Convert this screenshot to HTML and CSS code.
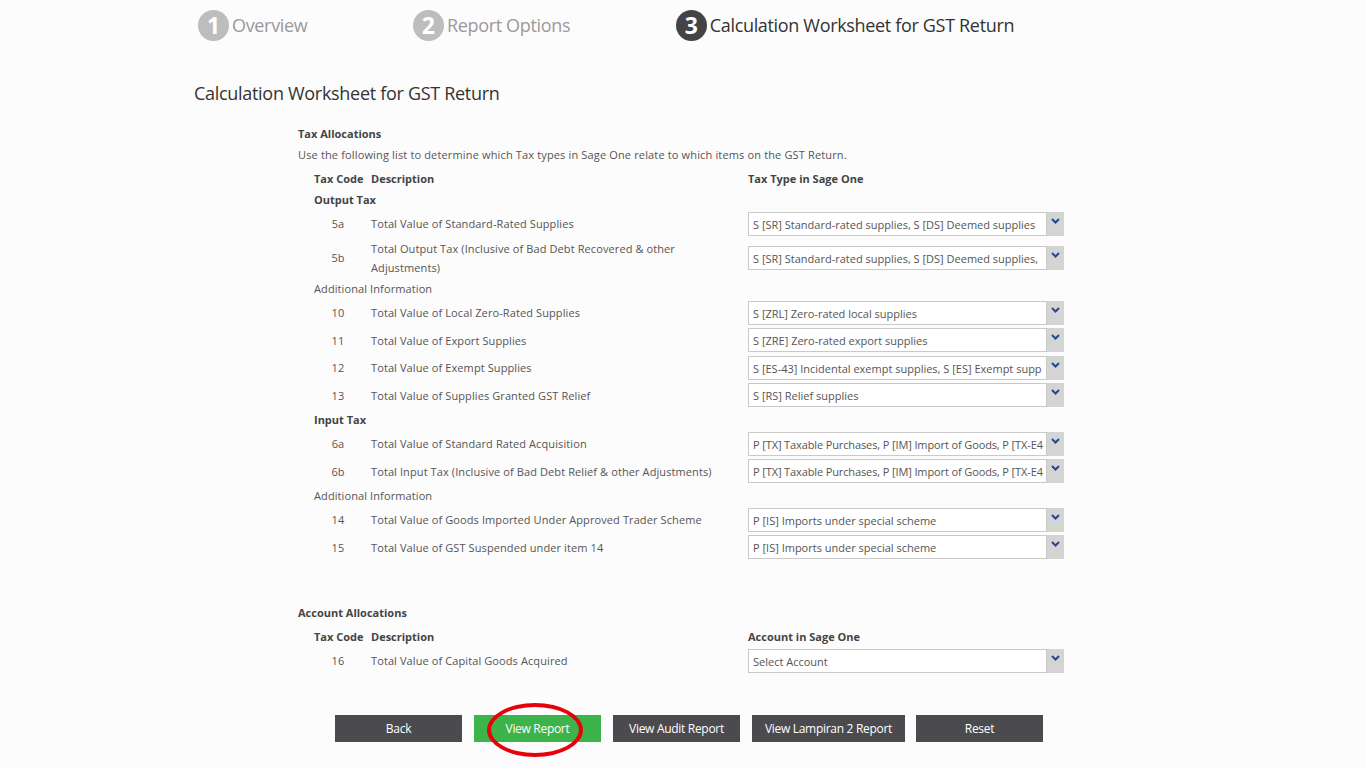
FILE: index.html
```html
<!DOCTYPE html>
<html>
<head>
<meta charset="utf-8">
<link rel="stylesheet" href="styles.css">
</head>
<body>
<div class="steps">
  <div class="step done"><span class="num">1</span><span class="label">Overview</span></div>
  <div class="step done"><span class="num">2</span><span class="label">Report Options</span></div>
  <div class="step current"><span class="num">3</span><span class="label">Calculation Worksheet for GST Return</span></div>
</div>

<h1 class="title">Calculation Worksheet for GST Return</h1>

<div class="content">
  <div class="section-title">Tax Allocations</div>
  <div class="intro">Use the following list to determine which Tax types in Sage One relate to which items on the GST Return.</div>

  <div class="row head"><span class="code">Tax Code</span><span class="desc">Description</span><span class="sel-head">Tax Type in Sage One</span></div>
  <div class="row group bold">Output Tax</div>
  <div class="row item"><span class="code">5a</span><span class="desc">Total Value of Standard-Rated Supplies</span><div class="select"><span class="val">S [SR] Standard-rated supplies, S [DS] Deemed supplies</span><span class="arrow"><svg width="9" height="6" viewBox="0 0 9 6"><path d="M1 1 L4.5 4.5 L8 1" fill="none" stroke="#24478f" stroke-width="2"/></svg></span></div></div>
  <div class="row item tall"><span class="code">5b</span><span class="desc">Total Output Tax (Inclusive of Bad Debt Recovered &amp; other Adjustments)</span><div class="select"><span class="val">S [SR] Standard-rated supplies, S [DS] Deemed supplies,</span><span class="arrow"><svg width="9" height="6" viewBox="0 0 9 6"><path d="M1 1 L4.5 4.5 L8 1" fill="none" stroke="#24478f" stroke-width="2"/></svg></span></div></div>
  <div class="row group">Additional Information</div>
  <div class="row item"><span class="code">10</span><span class="desc">Total Value of Local Zero-Rated Supplies</span><div class="select"><span class="val">S [ZRL] Zero-rated local supplies</span><span class="arrow"><svg width="9" height="6" viewBox="0 0 9 6"><path d="M1 1 L4.5 4.5 L8 1" fill="none" stroke="#24478f" stroke-width="2"/></svg></span></div></div>
  <div class="row item"><span class="code">11</span><span class="desc">Total Value of Export Supplies</span><div class="select"><span class="val">S [ZRE] Zero-rated export supplies</span><span class="arrow"><svg width="9" height="6" viewBox="0 0 9 6"><path d="M1 1 L4.5 4.5 L8 1" fill="none" stroke="#24478f" stroke-width="2"/></svg></span></div></div>
  <div class="row item"><span class="code">12</span><span class="desc">Total Value of Exempt Supplies</span><div class="select"><span class="val">S [ES-43] Incidental exempt supplies, S [ES] Exempt supp</span><span class="arrow"><svg width="9" height="6" viewBox="0 0 9 6"><path d="M1 1 L4.5 4.5 L8 1" fill="none" stroke="#24478f" stroke-width="2"/></svg></span></div></div>
  <div class="row item"><span class="code">13</span><span class="desc">Total Value of Supplies Granted GST Relief</span><div class="select"><span class="val">S [RS] Relief supplies</span><span class="arrow"><svg width="9" height="6" viewBox="0 0 9 6"><path d="M1 1 L4.5 4.5 L8 1" fill="none" stroke="#24478f" stroke-width="2"/></svg></span></div></div>
  <div class="row group bold">Input Tax</div>
  <div class="row item"><span class="code">6a</span><span class="desc">Total Value of Standard Rated Acquisition</span><div class="select"><span class="val tight">P [TX] Taxable Purchases, P [IM] Import of Goods, P [TX-E4</span><span class="arrow"><svg width="9" height="6" viewBox="0 0 9 6"><path d="M1 1 L4.5 4.5 L8 1" fill="none" stroke="#24478f" stroke-width="2"/></svg></span></div></div>
  <div class="row item"><span class="code">6b</span><span class="desc">Total Input Tax (Inclusive of Bad Debt Relief &amp; other Adjustments)</span><div class="select"><span class="val tight">P [TX] Taxable Purchases, P [IM] Import of Goods, P [TX-E4</span><span class="arrow"><svg width="9" height="6" viewBox="0 0 9 6"><path d="M1 1 L4.5 4.5 L8 1" fill="none" stroke="#24478f" stroke-width="2"/></svg></span></div></div>
  <div class="row group">Additional Information</div>
  <div class="row item"><span class="code">14</span><span class="desc">Total Value of Goods Imported Under Approved Trader Scheme</span><div class="select"><span class="val">P [IS] Imports under special scheme</span><span class="arrow"><svg width="9" height="6" viewBox="0 0 9 6"><path d="M1 1 L4.5 4.5 L8 1" fill="none" stroke="#24478f" stroke-width="2"/></svg></span></div></div>
  <div class="row item"><span class="code">15</span><span class="desc">Total Value of GST Suspended under item 14</span><div class="select"><span class="val">P [IS] Imports under special scheme</span><span class="arrow"><svg width="9" height="6" viewBox="0 0 9 6"><path d="M1 1 L4.5 4.5 L8 1" fill="none" stroke="#24478f" stroke-width="2"/></svg></span></div></div>

  <div class="section-title account">Account Allocations</div>
  <div class="row head"><span class="code">Tax Code</span><span class="desc">Description</span><span class="sel-head">Account in Sage One</span></div>
  <div class="row item"><span class="code">16</span><span class="desc">Total Value of Capital Goods Acquired</span><div class="select"><span class="val">Select Account</span><span class="arrow"><svg width="9" height="6" viewBox="0 0 9 6"><path d="M1 1 L4.5 4.5 L8 1" fill="none" stroke="#24478f" stroke-width="2"/></svg></span></div></div>
</div>

<div class="buttons">
  <button class="btn">Back</button>
  <button class="btn green">View Report<span class="ring"></span></button>
  <button class="btn">View Audit Report</button>
  <button class="btn wide">View Lampiran 2 Report</button>
  <button class="btn">Reset</button>
</div>
</body>
</html>
```

FILE: styles.css
```css
html, body {
  margin: 0;
  padding: 0;
  background: #fcfcfc;
  font-family: "Open Sans", "Noto Sans", sans-serif;
  color: #555;
}
body {
  width: 1366px;
  height: 768px;
  overflow: hidden;
}
.steps {
  display: flex;
  gap: 105.5px;
  padding: 9px 0 0 198px;
  height: 32px;
}
.step {
  display: flex;
  align-items: center;
}
.step .num {
  width: 31px;
  height: 31px;
  border-radius: 50%;
  background: #bdbdbd;
  color: #fff;
  font-weight: 700;
  font-size: 23px;
  line-height: 31px;
  text-align: center;
  margin-right: 3px;
}
.step .label {
  font-size: 18px;
  color: #9a9a9a;
  letter-spacing: -0.33px;
}
.step.current .num { background: #444446; }
.step.current .label { color: #333; }
.title {
  margin: 41px 0 0 194px;
  font-size: 18px;
  font-weight: 400;
  color: #333;
  line-height: 22px;
  letter-spacing: -0.3px;
}
.content {
  margin: 19px 0 0 298px;
  width: 766px;
  font-size: 11px;
  letter-spacing: 0.1px;
}
.section-title {
  font-weight: 700;
  color: #444;
  line-height: 21px;
  letter-spacing: 0;
}
.section-title.account { margin-top: 41px; }
.intro {
  line-height: 21px;
  color: #555;
  letter-spacing: 0.15px;
}
.row {
  display: flex;
  align-items: center;
  padding-left: 16px;
}
.row.head {
  height: 21px;
  margin-top: 3px;
  font-weight: 700;
  color: #444;
  letter-spacing: 0;
}
.row.group {
  height: 21px;
  color: #555;
}
.row.group.bold { font-weight: 700; color: #444; letter-spacing: 0; }
.row.item { height: 27.5px; }
.row.item.tall { height: 40.5px; }
.code {
  width: 57px;
  flex: none;
}
.row.item .code {
  width: 48px;
  padding-right: 9px;
  text-align: center;
}
.desc {
  width: 377px;
  flex: none;
  line-height: 19px;
  padding-right: 30px;
  box-sizing: border-box;
}
.select {
  width: 316px;
  height: 24px;
  display: flex;
  flex: none;
  box-sizing: border-box;
}
.select .val {
  flex: 1;
  min-width: 0;
  border: 1px solid #c9c9c9;
  background: #fff;
  padding: 1px 4px 0;
  line-height: 21px;
  white-space: nowrap;
  overflow: hidden;
  color: #555;
  letter-spacing: 0;
}
.select .val.tight { letter-spacing: -0.12px; }
.select .arrow {
  width: 17px;
  background: #d4d4d4;
  display: flex;
  justify-content: center;
  align-items: flex-start;
  padding-top: 6px;
  box-sizing: border-box;
}
.buttons {
  display: flex;
  gap: 12px;
  margin: 40px 0 0 335px;
}
.btn {
  position: relative;
  width: 127px;
  height: 27px;
  border: none;
  background: #4b4b4f;
  color: #fff;
  font-family: "Open Sans", "Noto Sans", sans-serif;
  font-size: 12px;
  letter-spacing: -0.3px;
  padding: 0;
}
.btn.wide { width: 153px; margin-right: -1px; }
.btn.green { background: #3cb44b; }
.ring {
  position: absolute;
  left: 13px;
  top: -12px;
  width: 88px;
  height: 46px;
  border: 4px solid #e8000b;
  border-radius: 50%;
}
```
